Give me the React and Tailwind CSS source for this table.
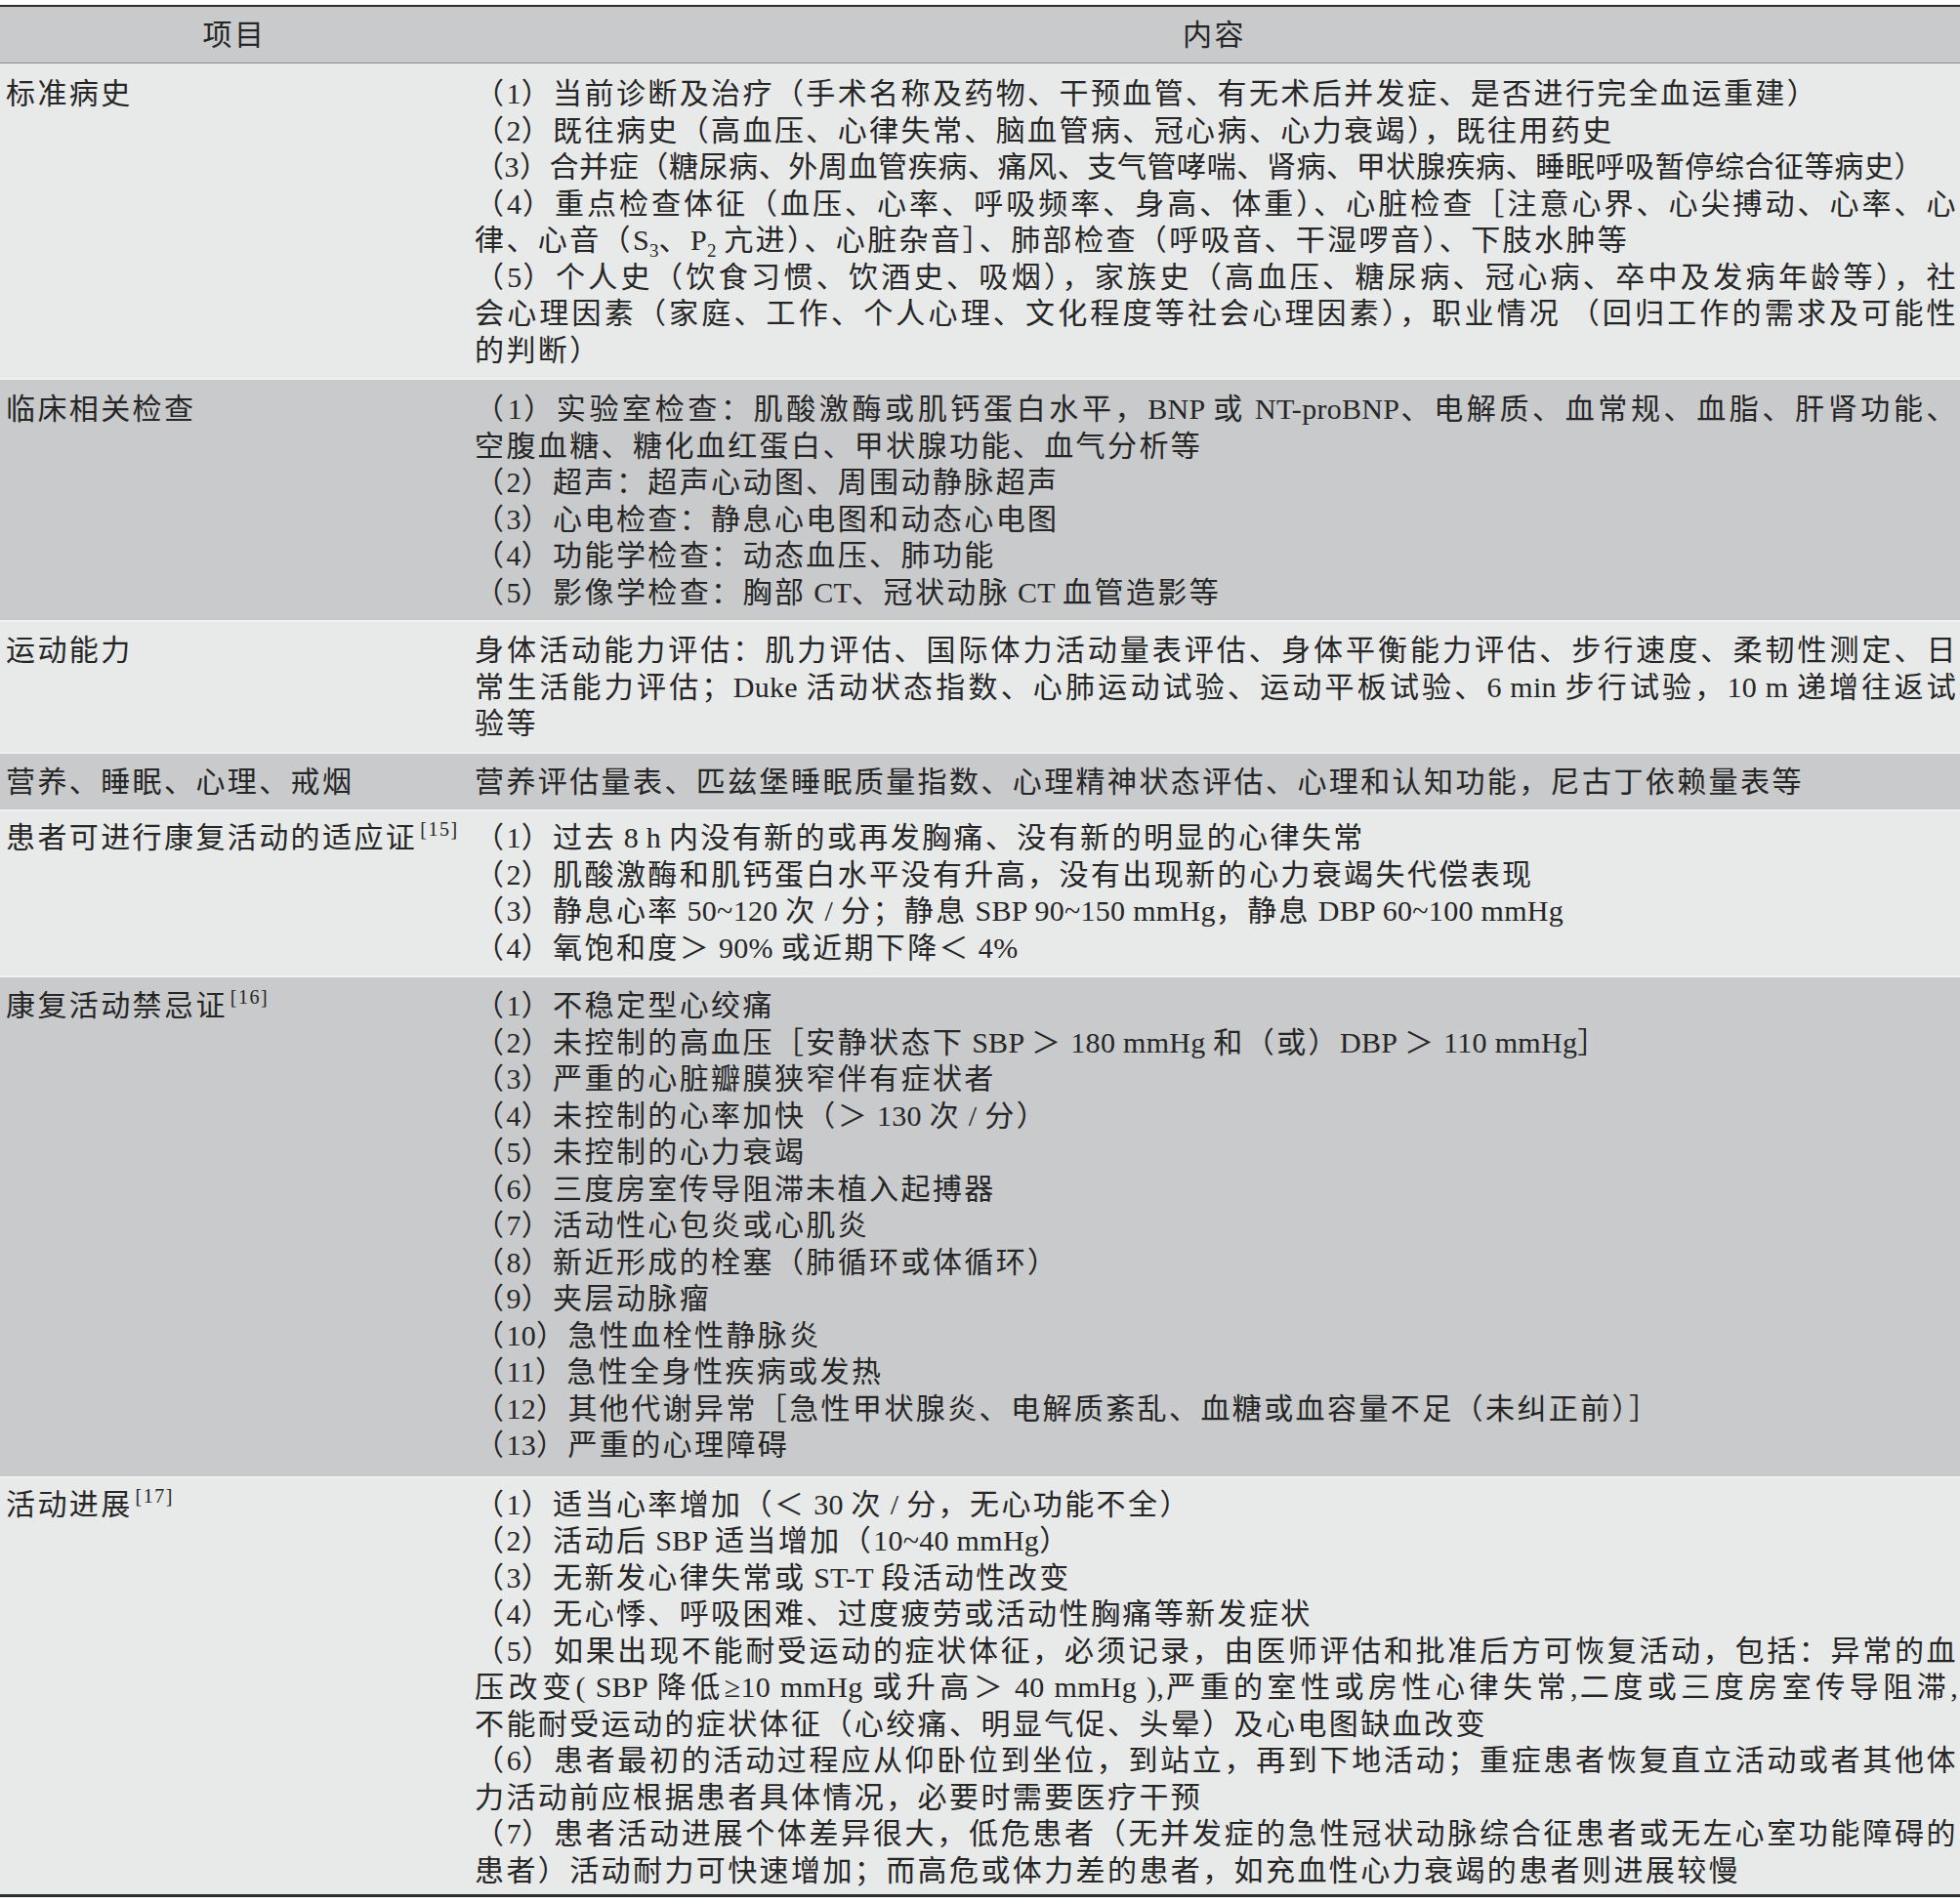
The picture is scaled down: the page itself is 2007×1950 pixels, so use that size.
import React from 'react'

const LIGHT = 'bg-[#e8e9e9]'
const GRAY = 'bg-[#c9cacc]'

const rows = [
  {
    label: '标准病史',
    bg: LIGHT,
    pad: 'pt-[12px] pb-[10px]',
    items: [
      ['（1）当前诊断及治疗（手术名称及药物、干预血管、有无术后并发症、是否进行完全血运重建）'],
      ['（2）既往病史（高血压、心律失常、脑血管病、冠心病、心力衰竭），既往用药史'],
      [{ t: '（3）合并症（糖尿病、外周血管疾病、痛风、支气管哮喘、肾病、甲状腺疾病、睡眠呼吸暂停综合征等病史）', tight: true }],
      [
        '（4）重点检查体征（血压、心率、呼吸频率、身高、体重）、心脏检查［注意心界、心尖搏动、心率、心',
        '律、心音（S_3、P_2 亢进）、心脏杂音］、肺部检查（呼吸音、干湿啰音）、下肢水肿等',
      ],
      [
        '（5）个人史（饮食习惯、饮酒史、吸烟），家族史（高血压、糖尿病、冠心病、卒中及发病年龄等），社',
        '会心理因素（家庭、工作、个人心理、文化程度等社会心理因素），职业情况 （回归工作的需求及可能性',
        '的判断）',
      ],
    ],
  },
  {
    label: '临床相关检查',
    bg: GRAY,
    pad: 'pt-[11px] pb-[10px]',
    items: [
      [
        '（1）实验室检查：肌酸激酶或肌钙蛋白水平，BNP 或 NT-proBNP、电解质、血常规、血脂、肝肾功能、',
        '空腹血糖、糖化血红蛋白、甲状腺功能、血气分析等',
      ],
      ['（2）超声：超声心动图、周围动静脉超声'],
      ['（3）心电检查：静息心电图和动态心电图'],
      ['（4）功能学检查：动态血压、肺功能'],
      ['（5）影像学检查：胸部 CT、冠状动脉 CT 血管造影等'],
    ],
  },
  {
    label: '运动能力',
    bg: LIGHT,
    pad: 'pt-[10px] pb-[10px]',
    items: [
      [
        '身体活动能力评估：肌力评估、国际体力活动量表评估、身体平衡能力评估、步行速度、柔韧性测定、日',
        '常生活能力评估；Duke 活动状态指数、心肺运动试验、运动平板试验、6 min 步行试验，10 m 递增往返试',
        '验等',
      ],
    ],
  },
  {
    label: '营养、睡眠、心理、戒烟',
    bg: GRAY,
    pad: 'pt-[10px] pb-[10px]',
    items: [['营养评估量表、匹兹堡睡眠质量指数、心理精神状态评估、心理和认知功能，尼古丁依赖量表等']],
  },
  {
    label: '患者可进行康复活动的适应证',
    cite: '15',
    bg: LIGHT,
    pad: 'pt-[8px] pb-[10px]',
    items: [
      ['（1）过去 8 h 内没有新的或再发胸痛、没有新的明显的心律失常'],
      ['（2）肌酸激酶和肌钙蛋白水平没有升高，没有出现新的心力衰竭失代偿表现'],
      ['（3）静息心率 50~120 次 / 分；静息 SBP 90~150 mmHg，静息 DBP 60~100 mmHg'],
      ['（4）氧饱和度＞ 90% 或近期下降＜ 4%'],
    ],
  },
  {
    label: '康复活动禁忌证',
    cite: '16',
    bg: GRAY,
    pad: 'pt-[10px] pb-[13px]',
    items: [
      ['（1）不稳定型心绞痛'],
      ['（2）未控制的高血压［安静状态下 SBP ＞ 180 mmHg 和（或）DBP ＞ 110 mmHg］'],
      ['（3）严重的心脏瓣膜狭窄伴有症状者'],
      ['（4）未控制的心率加快（＞ 130 次 / 分）'],
      ['（5）未控制的心力衰竭'],
      ['（6）三度房室传导阻滞未植入起搏器'],
      ['（7）活动性心包炎或心肌炎'],
      ['（8）新近形成的栓塞（肺循环或体循环）'],
      ['（9）夹层动脉瘤'],
      ['（10）急性血栓性静脉炎'],
      ['（11）急性全身性疾病或发热'],
      ['（12）其他代谢异常［急性甲状腺炎、电解质紊乱、血糖或血容量不足（未纠正前）］'],
      ['（13）严重的心理障碍'],
    ],
  },
  {
    label: '活动进展',
    cite: '17',
    bg: LIGHT,
    pad: 'pt-[8px] pb-[6px]',
    items: [
      ['（1）适当心率增加（＜ 30 次 / 分，无心功能不全）'],
      ['（2）活动后 SBP 适当增加（10~40 mmHg）'],
      ['（3）无新发心律失常或 ST-T 段活动性改变'],
      ['（4）无心悸、呼吸困难、过度疲劳或活动性胸痛等新发症状'],
      [
        '（5）如果出现不能耐受运动的症状体征，必须记录，由医师评估和批准后方可恢复活动，包括：异常的血',
        '压改变( SBP 降低≥10 mmHg 或升高＞ 40 mmHg ),严重的室性或房性心律失常,二度或三度房室传导阻滞,',
        '不能耐受运动的症状体征（心绞痛、明显气促、头晕）及心电图缺血改变',
      ],
      [
        '（6）患者最初的活动过程应从仰卧位到坐位，到站立，再到下地活动；重症患者恢复直立活动或者其他体',
        '力活动前应根据患者具体情况，必要时需要医疗干预',
      ],
      [
        '（7）患者活动进展个体差异很大，低危患者（无并发症的急性冠状动脉综合征患者或无左心室功能障碍的',
        '患者）活动耐力可快速增加；而高危或体力差的患者，如充血性心力衰竭的患者则进展较慢',
      ],
    ],
  },
]

// Latin runs get normal spacing, "_3" becomes a subscript
function Rich({ text }) {
  const parts = text.split(/(_\d|[ -^`-~≥]+)/).filter(Boolean)
  return parts.map((part, index) => {
    if (/^_\d$/.test(part)) {
      return (
        <span key={index} className="relative top-[7px] text-[19px] leading-none tracking-normal">
          {part.slice(1)}
        </span>
      )
    }
    if (/^[ -^`-~≥]+$/.test(part)) {
      return (
        <span key={index} className="leading-none tracking-[0.3px]">
          {part}
        </span>
      )
    }
    return <React.Fragment key={index}>{part}</React.Fragment>
  })
}

function Item({ lines }) {
  return (
    <div>
      {lines.map((line, index) => {
        const text = typeof line === 'string' ? line : line.t
        const tight = typeof line !== 'string' && line.tight
        const justify = index < lines.length - 1
        return (
          <div
            key={index}
            className={`h-[37.5px] ${justify ? 'text-justify [text-align-last:justify]' : ''} ${
              tight ? 'tracking-[0.6px]' : ''
            }`}
          >
            <Rich text={text} />
          </div>
        )
      })}
    </div>
  )
}

export default function App() {
  return (
    <div className="min-h-screen bg-white pt-[5px] font-['Liberation_Serif','Noto_Sans_CJK_SC',serif] text-[30px] leading-[37.5px] tracking-[2.4px] text-[#262626]">
      <div className="border-t-2 border-b-[3px] border-[#2e2e2e]">
        <div className={`grid h-[58px] grid-cols-[480px_1fr] items-center border-b border-[#8a8a8a] text-center ${GRAY}`}>
          <div>项目</div>
          <div>内容</div>
        </div>
        {rows.map((row, index) => (
          <div
            key={row.label}
            className={`grid grid-cols-[480px_1fr] ${row.bg} ${row.pad} ${
              index > 0 ? 'border-t-2 border-[#f1f1f1]' : ''
            }`}
          >
            <div className="h-[37.5px] pl-[6px]">
              {row.label}
              {row.cite ? (
                <span className="relative -top-[12px] ml-[3px] text-[20px] leading-none tracking-[1.5px]">
                  [{row.cite}]
                </span>
              ) : null}
            </div>
            <div className="pl-[6px] pr-[2px]">
              {row.items.map((lines, i) => (
                <Item key={i} lines={lines} />
              ))}
            </div>
          </div>
        ))}
      </div>
    </div>
  )
}
